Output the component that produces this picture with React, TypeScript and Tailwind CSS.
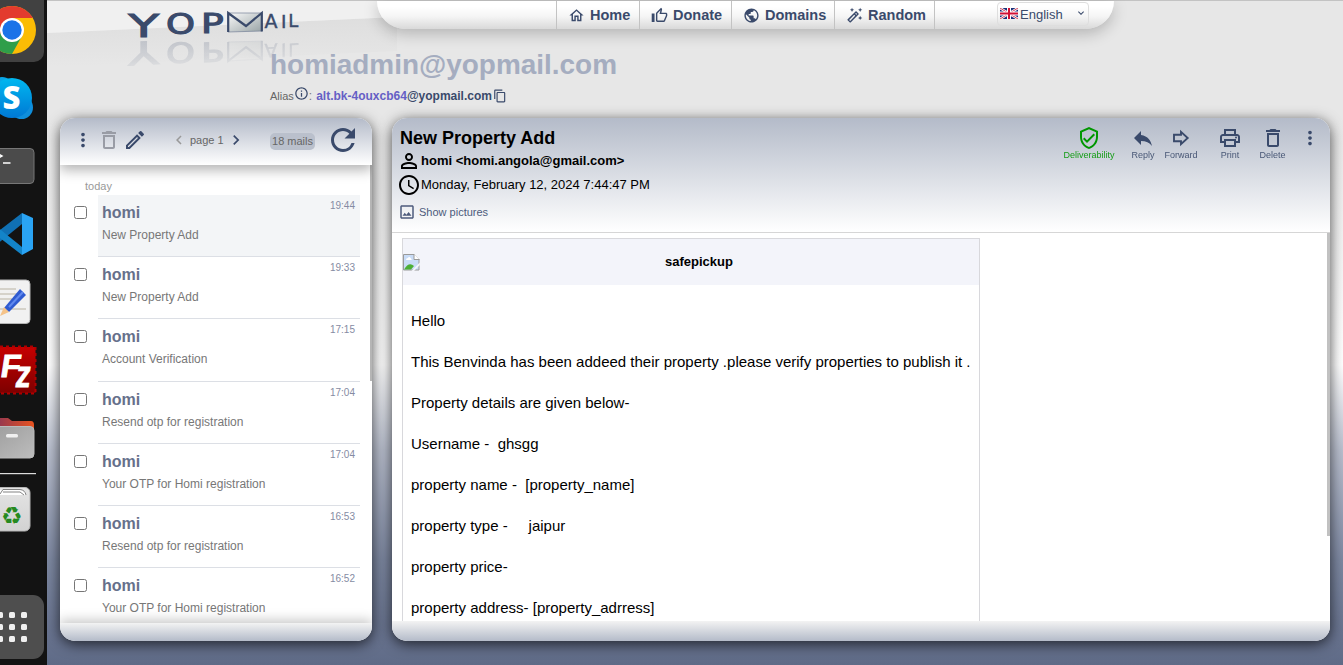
import React from "react";
import {
  MdOutlineHome, MdOutlineThumbUp, MdPublic, MdOutlineAutoFixHigh, MdInfoOutline, MdContentCopy, MdMoreVert,
  MdDeleteOutline, MdOutlineModeEdit, MdNavigateBefore, MdNavigateNext, MdRefresh, MdPersonOutline, MdAccessTime,
  MdOutlineImage, MdOutlineVerifiedUser, MdReply, MdOutlinePrint, MdExpandMore,
} from "react-icons/md";

const mails = [
  { time: "19:44", subject: "New Property Add" },
  { time: "19:33", subject: "New Property Add" },
  { time: "17:15", subject: "Account Verification" },
  { time: "17:04", subject: "Resend otp for registration" },
  { time: "17:04", subject: "Your OTP for Homi registration" },
  { time: "16:53", subject: "Resend otp for registration" },
  { time: "16:52", subject: "Your OTP for Homi registration" },
];

const lines = [
  "Hello",
  "This Benvinda has been addeed their property .please verify properties to publish it .",
  "Property details are given below-",
  "Username -  ghsgg",
  "property name -  [property_name]",
  "property type -     jaipur",
  "property price-",
  "property address- [property_adrress]",
];

function Dock() {
  return (
    <aside className="h-[665px] w-[47px] shrink-0 bg-[#131313]">
      <svg width="47" height="665" viewBox="0 0 47 665">
        <defs>
          <linearGradient id="skype" x2="0" y2="1"><stop stopColor="#00b8f0" /><stop offset="1" stopColor="#0078d4" /></linearGradient>
          <linearGradient id="fz" x2="0" y2="1"><stop stopColor="#c60000" /><stop offset="1" stopColor="#7d0000" /></linearGradient>
          <linearGradient id="folder" x2="1" y2="1"><stop stopColor="#9c9c9c" /><stop offset="1" stopColor="#bdbdbd" /></linearGradient>
          <linearGradient id="tab" x2="1"><stop stopColor="#8d3554" /><stop offset="1" stopColor="#e95420" /></linearGradient>
          <linearGradient id="paper" x2="0" y2="1"><stop stopColor="#e4e4e4" /><stop offset="1" stopColor="#d2d2d2" /></linearGradient>
          <clipPath id="cc"><circle cx="12" cy="30" r="24" /></clipPath>
        </defs>
        <rect x="-20" y="-10" width="64" height="72" rx="10" fill="#414141" />
        <g clipPath="url(#cc)">
          <rect x="-12" y="6" width="48" height="48" fill="#fbbc05" />
          <path d="M-12 6H36V18H12L1 36L-12 12Z" fill="#e33b2e" />
          <path d="M-12 12L2 36L12 42L22 36L12 54H-12Z" fill="#2f9e4a" />
        </g>
        <circle cx="12" cy="30" r="12" fill="#fff" /><circle cx="12" cy="30" r="9.7" fill="#1a73e8" />
        <circle cx="21.500" cy="107.500" r="11.500" fill="#0f8edb" /><circle cx="2" cy="88" r="11" fill="#0aa5e6" />
        <circle cx="12" cy="98" r="20" fill="url(#skype)" />
        <text x="2.500" y="109" fontFamily="Open Sans" fontWeight="800" fontSize="31" fill="#fff">S</text>
        <rect x="-10" y="148.500" width="44" height="35" rx="4" fill="#4b4b4b" stroke="#777" />
        <path d="M-3 153L2 156L-3 159M3 163H10.500" fill="none" stroke="#fff" strokeWidth="1.500" />
        <path d="M-4 233L22 213V224L-4 245Z" fill="#1070b3" />
        <path d="M-4 226L22 247V255L-4 235Z" fill="#1384c8" />
        <path d="M22 213L33 218V249L22 255Z" fill="#2aa4f4" />
        <rect x="-10" y="280" width="40" height="43.500" rx="4" fill="#f1f1f1" stroke="#b4b4b4" />
        <path d="M0 289H16M0 294H20M0 299H12M0 309H26" stroke="#cbc8bd" strokeWidth="1.600" />
        <path d="M4 308L20 289L26 295L9 312Z" fill="#2f5bd0" /><path d="M9 307L23 292" stroke="#6189ee" strokeWidth="2" /><path d="M0 316L4 307L9 312Z" fill="#f5c389" />
        <rect x="-10" y="347" width="45.500" height="46" fill="url(#fz)" />
        <path d="M0 346.500H35.500V393.500H0" fill="none" stroke="#b00000" strokeWidth="2" strokeDasharray="3 3" />
        <g fill="#fff" stroke="#fff" strokeWidth=".9" fontFamily="Liberation Sans" fontWeight="700">
          <text transform="translate(-.5 377) skewX(-9)" fontSize="32">F</text>
          <text transform="translate(14.500 386.500) skewX(-8) scale(.78 1)" fontSize="38">z</text>
        </g>
        <path d="M-5 418H8L12 421H31Q34 421 34 425V435H-5Z" fill="url(#tab)" />
        <rect x="-10" y="426.500" width="44" height="31.500" rx="4" fill="url(#folder)" stroke="#bbb" />
        <rect x="6" y="434" width="12" height="3.500" rx="1.500" fill="#f0f0f0" />
        <rect y="473" width="36" height="1.200" fill="#ddd" />
        <rect x="-10" y="487.500" width="40" height="43.500" rx="5" fill="url(#paper)" stroke="#b6b6b6" />
        <path d="M0 495V490H20Q26 490 26 495Z" fill="#fff" />
        <path d="M0 494L3 489.500H20Q25 490 26 495M3 492H20L24 495" fill="none" stroke="#777" strokeWidth=".9" />
        <text x="1" y="524" fontFamily="DejaVu Sans" fontSize="24" fill="#268a20">♻</text>
        <rect x="-20" y="595" width="64" height="64" rx="11" fill="#4e4e4e" />
        {[612, 624, 636].map((y) => [-3, 9, 21].map((x) => <rect key={`${x}-${y}`} x={x} y={y} width="6" height="6" rx="1.500" fill="#f0f0f0" />))}
      </svg>
    </aside>
  );
}

function LogoMark() {
  return (
    <g fontFamily="DejaVu Sans" fill="#3a4a6b">
      <g stroke="#3a4a6b" strokeWidth="1.100">
        <text transform="translate(81.500 37) scale(1.58 1)" fontSize="31.500">Y</text>
        <text transform="translate(119 34) scale(1.34 1)" fontSize="27.500">O</text>
        <text transform="translate(154 32.500) scale(1.42 1)" fontSize="26.500">P</text>
      </g>
      <path d="M181 13H215V31L181 32Z" fill="url(#env)" stroke="#77839a" strokeWidth=".7" />
      <path d="M181.200 32V13L199 26L214.800 13V31.500" fill="none" stroke="#3a4a6b" strokeWidth="2.200" />
      <g stroke="#3a4a6b" strokeWidth=".4">
        <text transform="translate(217.500 28)" fontSize="19">A</text>
        <text transform="translate(234 27.500)" fontSize="18.500">I</text>
        <text transform="translate(241.300 27)" fontSize="18">L</text>
      </g>
    </g>
  );
}

function Logo() {
  return (
    <svg className="block h-[114px] w-[350px]" viewBox="0 1 350 114">
      <defs>
        <linearGradient id="env" x2="1" y2="1"><stop stopColor="#fafafa" /><stop offset="1" stopColor="#98a3a5" /></linearGradient>
        <linearGradient id="wedge" x2="0" y2="1"><stop stopColor="#dedede" /><stop offset="1" stopColor="#e7e7e7" /></linearGradient>
        <linearGradient id="fade" gradientUnits="userSpaceOnUse" x1="0" y1="38" x2="0" y2="10"><stop stopColor="#fff" stopOpacity=".2" /><stop offset="1" stopColor="#fff" stopOpacity=".06" /></linearGradient>
        <mask id="mirror" maskUnits="userSpaceOnUse" x="70" y="0" width="200" height="45"><rect x="70" width="200" height="45" fill="url(#fade)" /></mask>
      </defs>
      <path d="M0 33L350 17V51L0 67Z" fill="url(#wedge)" />
      <path d="M0 0H350V17L0 33Z" fill="#f0f0f0" />
      <LogoMark />
      <g transform="matrix(1 -.055 0 -1 0 84)" aria-hidden="true"><g mask="url(#mirror)"><LogoMark /></g></g>
    </svg>
  );
}

function NavLink({ icon, label, width }: { icon: React.ReactNode; label: string; width: string }) {
  return (
    <a className={`flex items-center gap-[5px] border-l border-[#c3c3c3] pl-[11px] text-[14.500px] font-bold ${width}`}>
      {icon}<span className="relative top-px">{label}</span>
    </a>
  );
}

function Action({ icon, label, color = "text-[#3a4a6b]", width }: { icon: React.ReactNode; label: string; color?: string; width: string }) {
  return (
    <div className={`flex shrink-0 flex-col items-center ${color} ${width}`}>
      <div className="flex h-6 items-center">{icon}</div>
      <span className="text-[9px] leading-[10px] opacity-90">{label}</span>
    </div>
  );
}

function ForwardIcon() {
  return (
    <svg width="18" height="18" viewBox="0 0 18 18" fill="none" stroke="currentColor" strokeWidth="1.900">
      <path d="M2 5.800H9V2.800L15.700 9L9 15.200V12.200H2Z" />
    </svg>
  );
}

function BrokenImage() {
  return (
    <svg width="17" height="17" viewBox="0 0 17 17">
      <path d="M.5 .5H11L16 5.500V16H.500Z" fill="#c9dcf7" stroke="#9a9a9a" />
      <path d="M11 0V5.500H16.500" fill="#fff" stroke="#9a9a9a" />
      <path d="M3 6Q3 4 5 4Q6 2 8 4.500Q9 5 8.500 6Z" fill="#fff" />
      <path d="M1 15.500Q6 7 11 12L8 15.500Z" fill="#4caf35" />
      <path d="M8.500 17L16.800 8.500V11L11 17Z" fill="#f4f5fa" />
    </svg>
  );
}

export default function App() {
  return (
    <div className="flex h-[665px] w-[1343px] overflow-hidden font-['Liberation_Sans',sans-serif] text-[#3a4a6b]">
      <Dock />
      <div className="flex h-full min-w-0 flex-1 flex-col bg-[linear-gradient(#e7e7e7_0px,#e7e7e7_120px,#ffffff_365px,#b9bfce_450px,#7d88a1_560px,#66718d_640px,#5f6b87_665px)]">
        <header className="relative flex h-[118px] shrink-0 border-t border-[#c3c3c3]">
          <div className="-mr-5 h-[114px] w-[350px] shrink-0"><Logo /></div>
          <nav className="relative flex h-7 w-[737px] rounded-b-[30px] bg-[linear-gradient(#fff_20%,#f5f5f5_55%,#d9d9d9)] shadow-[0_5px_15px_rgba(0,0,0,.22)]">
            <div className="w-[179px]" />
            <NavLink width="w-[83px]" label="Home" icon={<MdOutlineHome size={17} />} />
            <NavLink width="w-[92px]" label="Donate" icon={<MdOutlineThumbUp size={17} />} />
            <NavLink width="w-[103px]" label="Domains" icon={<MdPublic size={17} />} />
            <NavLink width="w-[100px]" label="Random" icon={<MdOutlineAutoFixHigh size={17} />} />
            <div className="flex flex-1 border-l border-[#c3c3c3] pl-[62px] pt-[1px]">
              <div className="flex h-[24px] w-[92px] items-center rounded border border-[#dedede] pl-[2px] text-[13px]">
                <svg width="18" height="11" viewBox="0 0 18 11" className="mb-[1px]">
                  <rect width="18" height="11" fill="#192f78" />
                  <path d="M0 0L18 11M18 0L0 11" stroke="#fff" strokeWidth="2.400" />
                  <path d="M0 0L18 11M18 0L0 11" stroke="#c8102e" strokeWidth=".8" />
                  <path d="M9 0V11M0 5.500H18" stroke="#fff" strokeWidth="4" />
                  <path d="M9 0V11M0 5.500H18" stroke="#d21034" strokeWidth="2" />
                </svg>
                <span className="ml-[2px] flex-1 pt-[2px]">English</span>
                <MdExpandMore size={12} className="mb-[2px] mr-[1px]" />
              </div>
            </div>
          </nav>
          <div className="absolute left-[223px] top-[47px]">
            <h1 className="text-[27.950px] font-bold leading-[34px] text-[#a5adc0]">homiadmin@yopmail.com</h1>
            <div className="mt-[5px] flex h-[18px] items-center text-[12px] font-bold">
              <span className="text-[11px] font-normal text-[#666]">Alias</span>
              <MdInfoOutline size={15} className="mb-[6px]" />
              <span className="mr-[4px] font-normal text-[#777]">:</span>
              <span className="text-[#655fc5]">alt.bk-4ouxcb64</span><span>@yopmail.com</span>
              <MdContentCopy size={14} className="ml-[1px]" />
            </div>
          </div>
        </header>

        <main className="flex gap-5 pl-[13px]">
          <section className="flex h-[523px] w-[312px] flex-col overflow-hidden rounded-[15px] bg-white shadow-[0_3px_14px_rgba(0,0,0,.7)]">
            <div className="relative z-10 flex h-[47px] shrink-0 items-center bg-[linear-gradient(#b4bbc9,#fff)] pl-[12px] pr-[17px] text-[11px] text-[#666] shadow-[0_5px_12px_rgba(0,0,0,.3)]">
              <MdMoreVert size={22} className="mb-[3px] text-[#3a4a6b]" />
              <MdDeleteOutline size={24} className="mb-[3px] ml-[3px] text-[#999ca5]" />
              <MdOutlineModeEdit size={24} className="mb-[3px] ml-[2px] text-[#3a4a6b]" />
              <MdNavigateBefore size={18} className="mb-[3px] ml-[23px] text-[#999]" />
              <span className="mb-[3px] ml-[2px]">page 1</span>
              <MdNavigateNext size={20} className="mb-[3px] ml-[2px] text-[#3a4a6b]" />
              <span className="ml-auto mr-[10px] rounded-[5px] bg-[#bac0cc] px-[2px] leading-[17px]">18 mails</span>
              <MdRefresh size={36} className="-mr-[6px] mb-[3px] text-[#3a4a6b]" />
            </div>
            <div className="flex min-h-0 flex-1">
              <div className="w-[300px] shrink-0 pt-[13px]">
                <div className="h-[17px] pl-[25px] text-[11px] text-[#999]">today</div>
                {mails.map((m, i) => (
                  <div key={i} className="flex h-[62.200px]">
                    <div className="w-[38px] shrink-0 pl-[14px] pt-[11px]"><div className="size-[13px] rounded-[2.500px] border border-[#767676] bg-white" /></div>
                    <div className={`flex min-w-0 flex-1 justify-between border-b border-[#dcdfe5] pl-1 pr-[5px] ${i === 0 ? "bg-[#f3f5f7]" : ""}`}>
                      <div>
                        <div className="pt-[7px] text-[16px] font-bold leading-[21px] text-[#66708b]">homi</div>
                        <div className="pt-[4.100px] text-[12px] leading-[16px] text-[#777]">{m.subject}</div>
                      </div>
                      <span className="pt-[4px] text-[10px] leading-[13px] text-[#858ba3]">{m.time}</span>
                    </div>
                  </div>
                ))}
              </div>
              <div className="ml-auto h-[216px] w-[2px] bg-[#b5b5b5]" />
            </div>
            <div className="relative z-10 h-[18px] shrink-0 bg-[linear-gradient(#f3f3f3,#b4bbc9)] shadow-[0_-3px_12px_rgba(0,0,0,.22)]" />
          </section>

          <section className="flex h-[523px] w-[938px] flex-col overflow-hidden rounded-[15px] bg-white shadow-[0_3px_14px_rgba(0,0,0,.7)]">
            <div className="flex h-[115px] shrink-0 justify-between border-b border-[#d6d6d6] bg-[linear-gradient(#b4bbc9,#fff)] pl-2 text-black">
              <div className="pt-[9px]">
                <h2 className="text-[18px] font-bold leading-[22px]">New Property Add</h2>
                <div className="flex h-[24px] items-center text-[13px] font-bold"><MdPersonOutline size={24} className="-ml-[3px]" />homi &lt;homi.angola@gmail.com&gt;</div>
                <div className="flex h-[24px] items-center text-[13px]"><MdAccessTime size={24} className="-ml-[3px]" />Monday, February 12, 2024 7:44:47 PM</div>
                <div className="mt-[6px] flex h-[18px] items-center gap-[3px] text-[11px] text-[#4d5b7c]"><MdOutlineImage size={18} className="-ml-[2px]" />Show pictures</div>
              </div>
              <div className="flex pt-[8px]">
                <Action width="w-[64px]" label="Deliverability" color="text-[#009700]" icon={<MdOutlineVerifiedUser size={24} />} />
                <Action width="w-[44px]" label="Reply" icon={<MdReply size={24} />} />
                <Action width="w-[32px]" label="Forward" icon={<ForwardIcon />} />
                <Action width="w-[66px]" label="Print" icon={<MdOutlinePrint size={24} />} />
                <Action width="w-[19px]" label="Delete" icon={<MdDeleteOutline size={24} />} />
                <div className="flex h-6 w-[48px] items-center justify-center pl-[8px] text-[#3a4a6b]"><MdMoreVert size={22} /></div>
              </div>
            </div>
            <div className="flex min-h-0 flex-1 justify-between overflow-hidden pl-[10px] text-black">
              <article className="mt-[5px] h-[500px] w-[578px] shrink-0 border border-[#d8d8dc]">
                <div className="relative flex h-[46px] items-center bg-[#f3f4fa]">
                  <BrokenImage />
                  <span className="flex-1 pl-[8px] pr-[9px] text-center text-[13px] font-bold">safepickup</span>
                </div>
                <div className="pl-2 pt-[15px]">
                  {lines.map((line) => <p key={line} className="h-[41px] whitespace-pre text-[15px] leading-[41px]">{line}</p>)}
                </div>
              </article>
              <div className="h-[303px] w-[3px] bg-[#c1c1c1]" />
            </div>
            <div className="h-[20px] shrink-0 bg-[linear-gradient(#f3f3f3,#b4bbc9)]" />
          </section>
        </main>
      </div>
    </div>
  );
}
